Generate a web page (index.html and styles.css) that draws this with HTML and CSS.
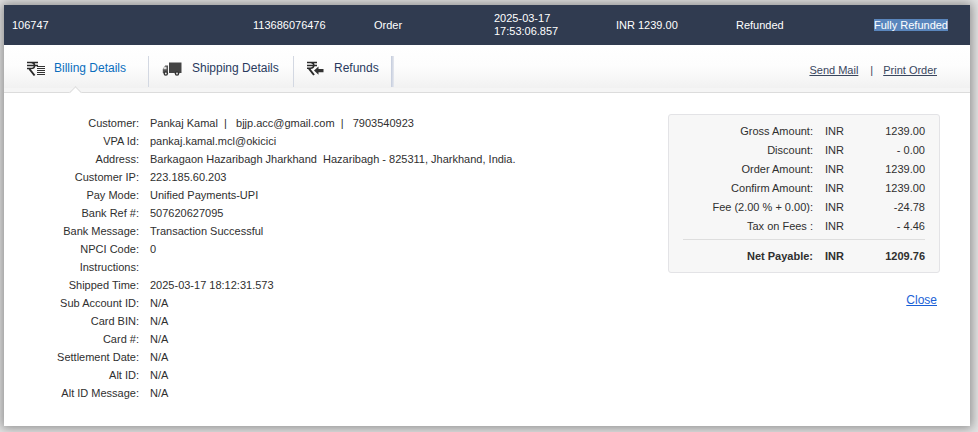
FILE: index.html
```html
<!DOCTYPE html>
<html lang="en">
<head>
<meta charset="utf-8">
<title>Order details</title>
<link rel="stylesheet" href="styles.css">
</head>
<body>
<main class="panel">
  <header class="summary">
    <span>106747</span>
    <span>113686076476</span>
    <span>Order</span>
    <span class="stamp">2025-03-17<br>17:53:06.857</span>
    <span>INR 1239.00</span>
    <span>Refunded</span>
    <span><span class="selected">Fully Refunded</span></span>
  </header>
  <nav class="tabs">
    <a class="tab tab-billing active">
      <svg class="icon" width="20" height="16" viewBox="0 0 20 16"><path d="M1 1.500h11M1 4.600h11M1 7.600h3.600c2.600 0 4-1.200 4-3.100 0-1.700-1-2.800-3.300-3H3" fill="none" stroke="#2b2b2b" stroke-width="1.500"/><path d="M3.400 8l5.200 6.500" fill="none" stroke="#2b2b2b" stroke-width="2"/><path d="M11 5.500h8M11 7.500h8M11 9.500h8M11 11.500h8M11 13.500h8" fill="none" stroke="#333" stroke-width="1"/></svg>
      Billing Details
    </a>
    <a class="tab tab-shipping">
      <svg class="icon" width="20" height="16" viewBox="0 0 20 16"><path d="M7 1.500h12.500v10.500H7z" fill="#444"/><path d="M6 4.500H3.200L.8 8v4H6z" fill="#555"/><path d="M2.300 5.800h2.200v2.400H1.200z" fill="#ddd"/><circle cx="3.800" cy="12.500" r="2.300" fill="#333"/><circle cx="3.800" cy="12.500" r=".9" fill="#eee"/><circle cx="15" cy="12.500" r="2.300" fill="#333"/><circle cx="15" cy="12.500" r=".9" fill="#eee"/></svg>
      Shipping Details
    </a>
    <a class="tab tab-refunds">
      <svg class="icon" width="18" height="16" viewBox="0 0 18 16"><path d="M1 1.500h10M1 4.400h10M1 7.200h3.200c2.400 0 3.700-1.100 3.700-2.900 0-1.600-1-2.600-3-2.800" fill="none" stroke="#2b2b2b" stroke-width="1.500"/><path d="M3 7.600l5 6.400" fill="none" stroke="#2b2b2b" stroke-width="2"/><path d="M8 9.500L12.500 5.500v2.500h5v3.200h-5v2.600z" fill="#333"/></svg>
      Refunds
    </a>
    <div class="actions">
      <a class="action">Send Mail</a>
      <span class="bar">|</span>
      <a class="action">Print Order</a>
    </div>
    <i class="caret"></i>
  </nav>
  <section class="content">
    <dl class="details">
      <dt>Customer:</dt><dd>Pankaj Kamal &nbsp;|&nbsp;&nbsp; bjjp.acc@gmail.com &nbsp;|&nbsp;&nbsp; 7903540923</dd>
      <dt>VPA Id:</dt><dd>pankaj.kamal.mcl@okicici</dd>
      <dt>Address:</dt><dd>Barkagaon Hazaribagh Jharkhand &nbsp;Hazaribagh - 825311, Jharkhand, India.</dd>
      <dt>Customer IP:</dt><dd>223.185.60.203</dd>
      <dt>Pay Mode:</dt><dd>Unified Payments-UPI</dd>
      <dt>Bank Ref #:</dt><dd>507620627095</dd>
      <dt>Bank Message:</dt><dd>Transaction Successful</dd>
      <dt>NPCI Code:</dt><dd>0</dd>
      <dt>Instructions:</dt><dd></dd>
      <dt>Shipped Time:</dt><dd>2025-03-17 18:12:31.573</dd>
      <dt>Sub Account ID:</dt><dd>N/A</dd>
      <dt>Card BIN:</dt><dd>N/A</dd>
      <dt>Card #:</dt><dd>N/A</dd>
      <dt>Settlement Date:</dt><dd>N/A</dd>
      <dt>Alt ID:</dt><dd>N/A</dd>
      <dt>Alt ID Message:</dt><dd>N/A</dd>
    </dl>
    <aside class="side">
      <div class="amounts">
        <div class="row"><span class="lbl">Gross Amount:</span><span>INR</span><span class="num">1239.00</span></div>
        <div class="row"><span class="lbl">Discount:</span><span>INR</span><span class="num">- 0.00</span></div>
        <div class="row"><span class="lbl">Order Amount:</span><span>INR</span><span class="num">1239.00</span></div>
        <div class="row"><span class="lbl">Confirm Amount:</span><span>INR</span><span class="num">1239.00</span></div>
        <div class="row"><span class="lbl">Fee (2.00 % + 0.00):</span><span>INR</span><span class="num">-24.78</span></div>
        <div class="row"><span class="lbl">Tax on Fees :</span><span>INR</span><span class="num">- 4.46</span></div>
        <div class="row total"><span class="lbl">Net Payable:</span><span>INR</span><span class="num">1209.76</span></div>
      </div>
      <a class="close">Close</a>
    </aside>
  </section>
</main>
</body>
</html>
```
FILE: styles.css
```css
* { box-sizing: border-box; }
html, body { height: 100%; }
body {
  margin: 0;
  background: #e4e4e4;
  font-family: "Liberation Sans", Arial, sans-serif;
  font-size: 11px;
  color: #2f2f2f;
  overflow: hidden;
}
.panel {
  margin: 5px 8px 0 4px;
  height: 421px;
  background: #fff;
  box-shadow: 0 0 10px 2px rgba(0, 0, 0, 0.38);
  display: flex;
  flex-direction: column;
}
.summary {
  height: 40px;
  flex: none;
  background: #303b50;
  color: #fff;
  display: grid;
  grid-template-columns: 241px 121px 120px 122px 120px 138px 1fr;
  align-items: center;
  padding-left: 8px;
  line-height: 12px;
}
.stamp { display: block; line-height: 13px; }
.selected { background: #5a86bd; }
.tabs {
  position: relative;
  height: 48px;
  flex: none;
  display: flex;
  align-items: flex-start;
  background: linear-gradient(#fff 0%, #fdfdfd 45%, #f1f1f1 92%, #f5f5f5 92%);
  border-bottom: 1px solid #dcdcdc;
  font-size: 12px;
  color: #2a3a5e;
}
.tab {
  height: 31px;
  margin-top: 11px;
  display: flex;
  align-items: flex-start;
  border-right: 1px solid #d3d8e2;
  line-height: 24px;
}
.icon { flex: none; margin-top: 5px; }
.tab-billing { width: 145px; padding-left: 22px; color: #0a6ebd; gap: 8px; }
.tab-shipping { width: 145px; padding-left: 14px; gap: 10px; }
.tab-shipping .icon { margin-left: -1px; }
.tab-refunds {
  width: 100px;
  padding-left: 13px;
  gap: 10px;
  border-right: 0;
}
.tab-refunds .icon { margin-left: -1px; }
.tab-refunds::after {
  content: "";
  margin-left: auto;
  width: 3px;
  height: 100%;
  background: linear-gradient(90deg, #c3cbdc, #e6e9ef);
}
.actions {
  margin-left: auto;
  margin-right: 33px;
  margin-top: 18px;
  display: flex;
  gap: 11px;
  font-size: 11px;
  line-height: 14px;
  color: #39465e;
}
.action { text-decoration: underline; }
.bar { margin: 0 -1px 0 1px; }
.caret {
  position: absolute;
  left: 67px;
  bottom: -5px;
  width: 9px;
  height: 9px;
  background: #fff;
  border-left: 1px solid #dcdcdc;
  border-top: 1px solid #dcdcdc;
  transform: rotate(45deg);
}
.content {
  display: flex;
  justify-content: space-between;
  align-items: flex-start;
  padding: 21px 30px 0 0;
}
.details {
  margin: 0;
  display: grid;
  grid-template-columns: 135px 1fr;
  column-gap: 11px;
  grid-auto-rows: 18px;
  line-height: 18px;
}
.details dt { text-align: right; }
.details dd { margin: 0; }
.side { width: 272px; display: flex; flex-direction: column; }
.amounts {
  height: 159px;
  background: #f7f7f7;
  border: 1px solid #e3e3e6;
  border-radius: 3px;
  padding: 7px 14px 0 14px;
}
.row {
  display: grid;
  grid-template-columns: 130px 36px 1fr;
  column-gap: 12px;
  height: 19px;
  line-height: 19px;
}
.lbl { text-align: right; }
.num { text-align: right; }
.total {
  margin-top: 3px;
  height: 33px;
  line-height: 33px;
  border-top: 1px solid #dedede;
  font-weight: bold;
}
.close {
  align-self: flex-end;
  margin: 20px 3px 0 0;
  font-size: 12px;
  line-height: 14px;
  color: #1a5fd6;
  text-decoration: underline;
}
```
